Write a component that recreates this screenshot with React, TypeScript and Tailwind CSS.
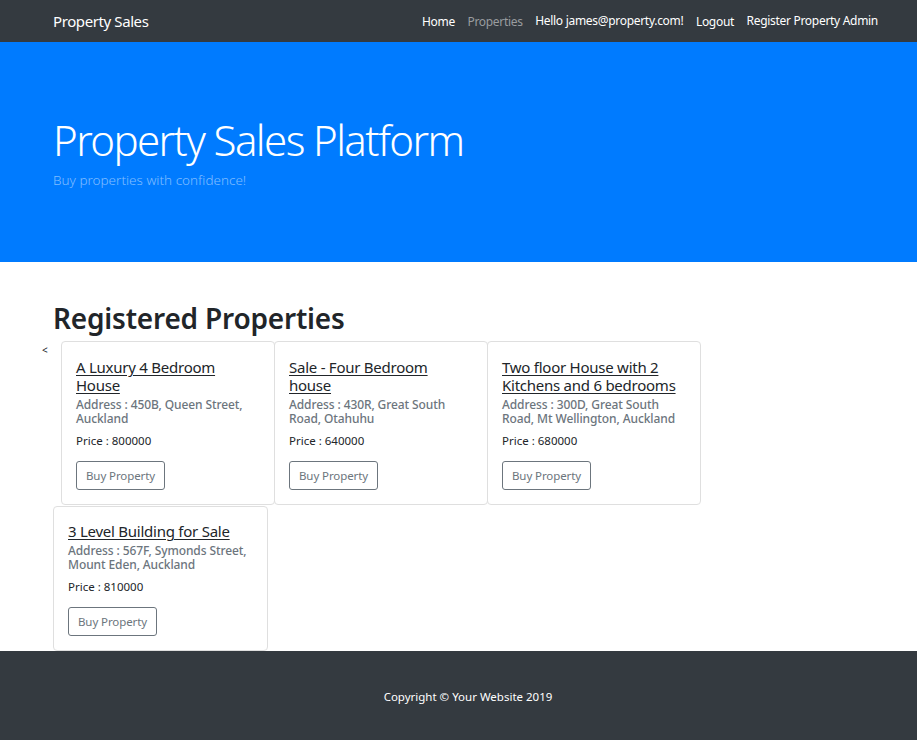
/**
 * Property sales listing page.
 */

interface Property {
    title: string;
    address: string;
    price: number;
}

const firstRow: Property[] = [
    { title: "A Luxury 4 Bedroom House", address: "450B, Queen Street, Auckland", price: 800000 },
    { title: "Sale - Four Bedroom house", address: "430R, Great South Road, Otahuhu", price: 640000 },
    { title: "Two floor House with 2 Kitchens and 6 bedrooms", address: "300D, Great South Road, Mt Wellington, Auckland", price: 680000 },
];

const secondRow: Property = {
    title: "3 Level Building for Sale",
    address: "567F, Symonds Street, Mount Eden, Auckland",
    price: 810000,
};

function PropertyCard({ p, className }: { p: Property; className: string }) {
    return (
        <div className={`border border-[#dfdfdf] rounded-[4px] bg-white px-[14px] pb-[14px] ${className}`}>
            <a href="#" className="block text-[15px] leading-[18px] tracking-[-0.25px] text-[#212529] underline underline-offset-2">
                {p.title}
            </a>
            <div className="mt-[4px] text-[12px] leading-[14px] tracking-[-0.1px] font-medium text-[#6c757d]">
                Address : {p.address}
            </div>
            <div className="mt-[8px] text-[11.5px] leading-[14px] text-[#212529]">Price : {p.price}</div>
            <button
                type="button"
                className="mt-[13px] h-[29px] px-[9px] border border-[#6c757d] rounded-[3px] text-[11.5px] tracking-[-0.1px] text-[#6c757d] bg-white"
            >
                Buy Property
            </button>
        </div>
    );
}

export default function App() {
    return (
        <div className="min-h-[740px] bg-white" style={{ fontFamily: '"Noto Sans", "Open Sans", sans-serif' }}>
            <nav className="h-[42px] bg-[#343a40] flex items-center pl-[53px] pr-[39px]">
                <span className="text-[15px] tracking-[-0.4px] text-white">Property Sales</span>
                <ul className="ml-auto flex items-center gap-[12.5px] text-[12px] tracking-[-0.3px]">
                    <li className="text-white pt-[2px]">Home</li>
                    <li className="text-[#999c9f] pt-[2px]">Properties</li>
                    <li className="text-white">Hello james@property.com!</li>
                    <li className="text-white pt-[2px]">Logout</li>
                    <li className="text-white">Register Property Admin</li>
                </ul>
            </nav>

            <header className="h-[220px] bg-[#007bff] pl-[53px] pt-[70px]">
                <h1 className="text-[42px] leading-[56px] tracking-[-1.6px] font-light text-white">Property Sales Platform</h1>
                <p className="text-[13.5px] leading-[20px] font-light text-[#80bdff] mt-[2px]">
                    Buy properties with confidence!
                </p>
            </header>

            <main className="pl-[53px] pt-[39px]">
                <h2 className="text-[28px] leading-[34px] tracking-[-0.2px] font-semibold text-[#212529]">Registered Properties</h2>
                <div className="mt-[6px] flex -ml-[11px]">
                    <span className="w-[19px] text-[10px] leading-[14px] text-[#212529] pt-[2px]">&lt;</span>
                    {firstRow.map((p, i) => (
                        <PropertyCard key={p.title} p={p} className={`w-[214px] pt-[16px] ${i > 0 ? "-ml-px" : ""}`} />
                    ))}
                </div>
                <div className="mt-[1px] flex">
                    <PropertyCard p={secondRow} className="w-[215px] pt-[15px]" />
                </div>
            </main>

            <footer className="h-[89px] bg-[#343a40] flex items-center justify-center pl-[19px] pt-[3px]">
                <p className="text-[11.5px] text-white">Copyright © Your Website 2019</p>
            </footer>
        </div>
    );
}
